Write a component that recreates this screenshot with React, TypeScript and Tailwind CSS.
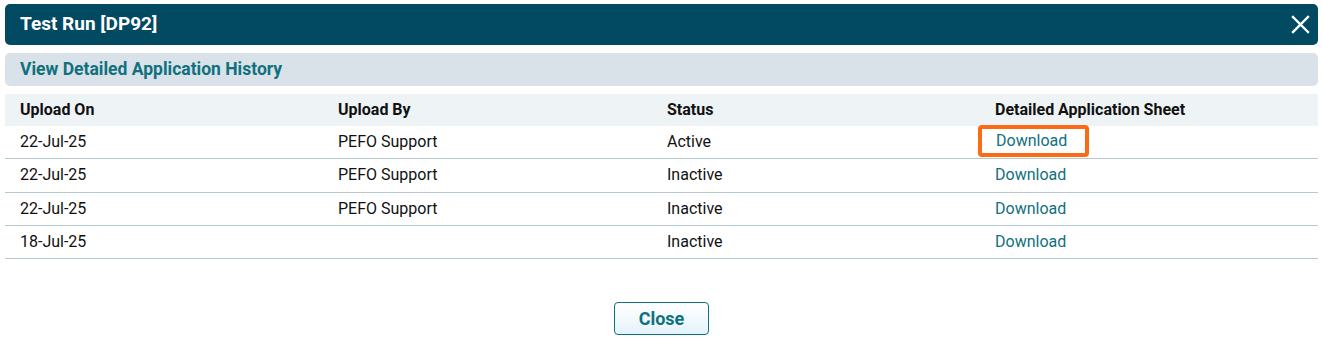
const rows = [
  { on: "22-Jul-25", by: "PEFO Support", status: "Active", focus: true },
  { on: "22-Jul-25", by: "PEFO Support", status: "Inactive" },
  { on: "22-Jul-25", by: "PEFO Support", status: "Inactive" },
  { on: "18-Jul-25", by: "", status: "Inactive" },
];

function App() {
  return (
    <div className="w-[1323px] h-[357px] bg-white font-['Roboto',sans-serif] text-[16px] text-[#111]">
      <div className="pt-1 px-[5px]">
        <div className="h-[41px] rounded-[5px] bg-[#024a61] flex items-center justify-between pl-[15px] pr-[8px]">
          <span className="text-white font-bold text-[19px]">Test Run [DP92]</span>
          <svg width="19" height="19" viewBox="0 0 19 19" stroke="white" strokeWidth="2.4" strokeLinecap="square">
            <path d="M2 2 L17 17 M17 2 L2 17" />
          </svg>
        </div>
        <div className="mt-2 h-[33px] rounded-[5px] bg-[#d8e2e8] flex items-center pl-[15px]">
          <span className="text-[#11707d] font-bold text-[17.5px]">View Detailed Application History</span>
        </div>
        <div className="mt-2">
          <div className="grid grid-cols-[318px_329px_328px_1fr] h-8 bg-[#eef3f6] items-center font-bold text-[16px]">
            <div className="pl-[15px]">Upload On</div>
            <div className="pl-[15px]">Upload By</div>
            <div className="pl-[15px]">Status</div>
            <div className="pl-[15px]">Detailed Application Sheet</div>
          </div>
          {rows.map((r, i) => (
            <div
              key={i}
              className="grid grid-cols-[318px_329px_328px_1fr] h-[33.3px] items-center border-b border-[#b5c8d2]"
            >
              <div className="pl-[15px]">{r.on}</div>
              <div className="pl-[15px]">{r.by}</div>
              <div className="pl-[15px]">{r.status}</div>
              <div>
                {r.focus ? (
                  <span className="inline-flex items-center h-[32px] -ml-[2px] -mt-[2px] pl-[14px] pr-[18px] border-4 border-[#fb6a14] rounded-[4px] text-[#11707d]">
                    Download
                  </span>
                ) : (
                  <span className="pl-[15px] text-[#11707d]">Download</span>
                )}
              </div>
            </div>
          ))}
        </div>
        <div className="flex justify-center mt-[43px]">
          <button className="w-[95px] h-[33px] rounded-[4px] border border-[#11707d] bg-gradient-to-b from-white to-[#e4f3fb] text-[#11707d] font-bold text-[18px]">
            Close
          </button>
        </div>
      </div>
    </div>
  );
}

export default App;
